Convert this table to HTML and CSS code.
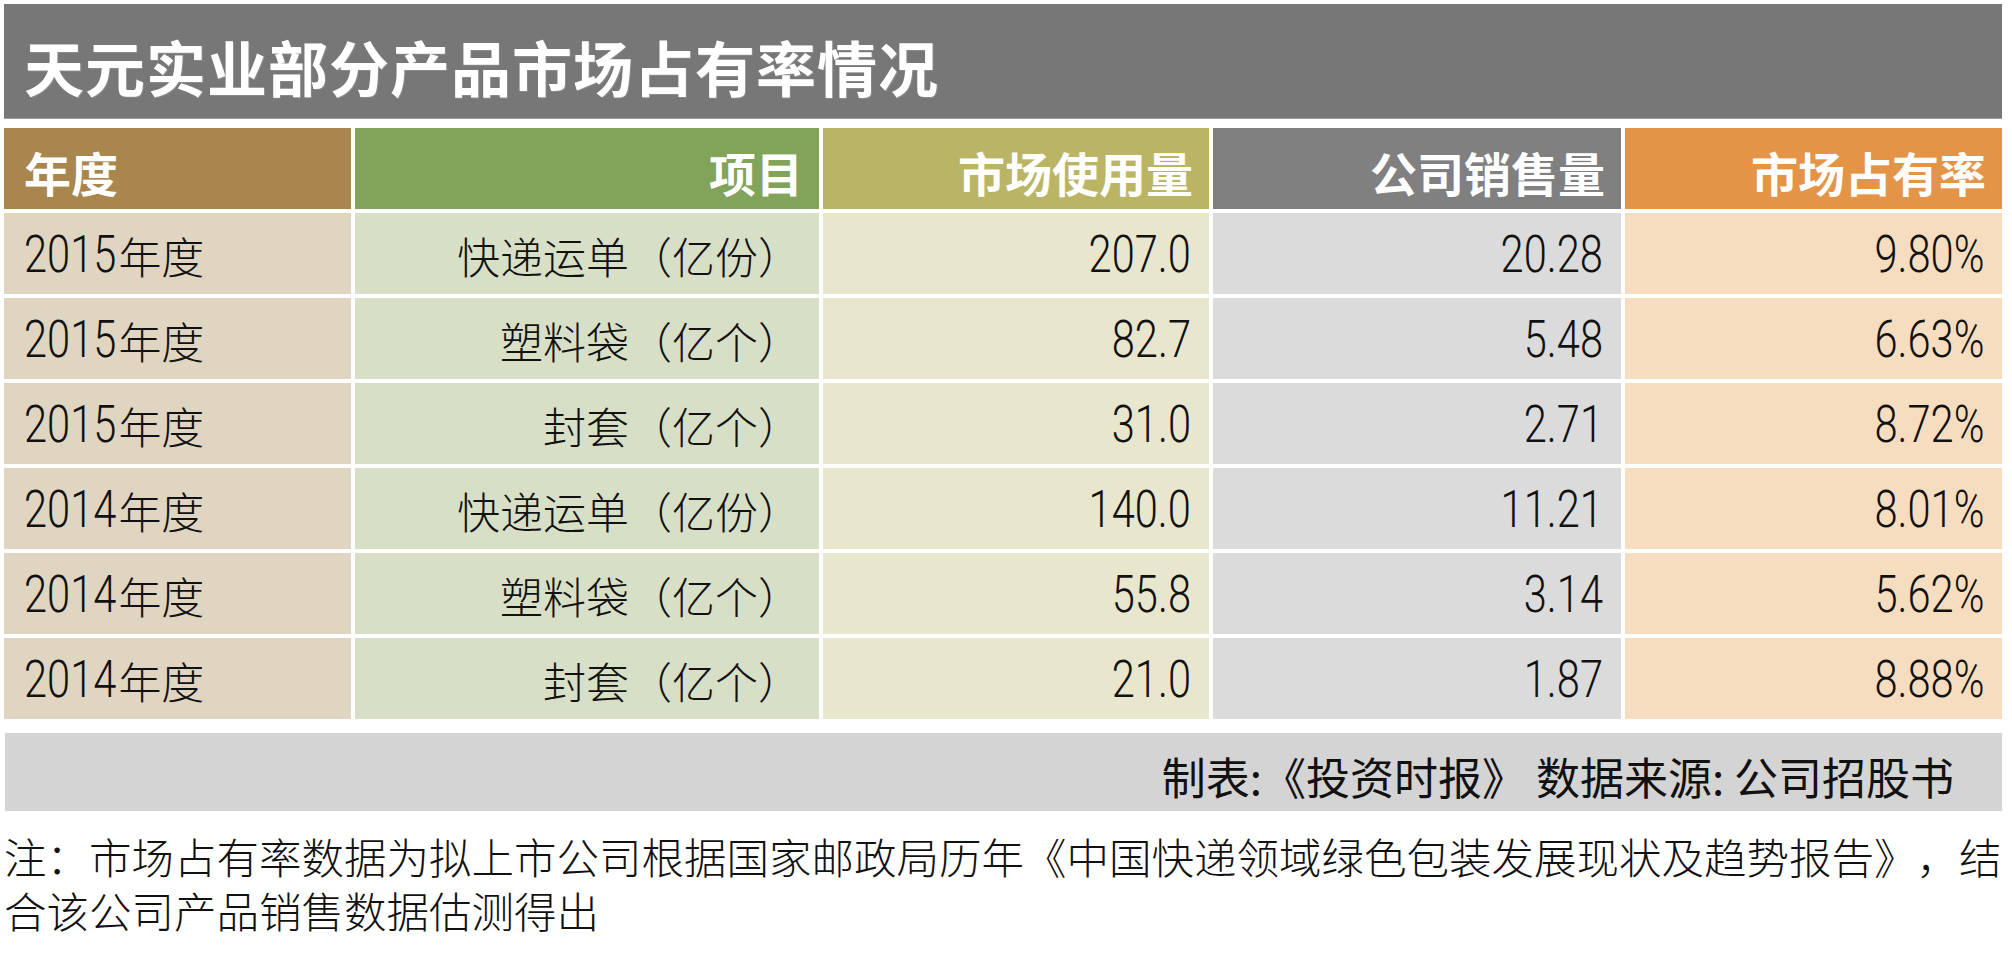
FILE: index.html
```html
<!DOCTYPE html>
<html lang="zh-CN">
<head>
<meta charset="utf-8">
<title>天元实业部分产品市场占有率情况</title>
<link rel="stylesheet" href="styles.css">
</head>
<body>
<div class="page">
  <div class="title">天元实业部分产品市场占有率情况</div>
  <div class="table">
    <div class="cell h c1 left">年度</div>
    <div class="cell h c2">项目</div>
    <div class="cell h c3">市场使用量</div>
    <div class="cell h c4">公司销售量</div>
    <div class="cell h c5">市场占有率</div>

    <div class="cell d c1 left"><span class="num">2015</span>年度</div>
    <div class="cell d c2">快递运单（亿份）</div>
    <div class="cell d c3"><span class="num">207.0</span></div>
    <div class="cell d c4"><span class="num">20.28</span></div>
    <div class="cell d c5"><span class="num">9.80%</span></div>

    <div class="cell d c1 left"><span class="num">2015</span>年度</div>
    <div class="cell d c2">塑料袋（亿个）</div>
    <div class="cell d c3"><span class="num">82.7</span></div>
    <div class="cell d c4"><span class="num">5.48</span></div>
    <div class="cell d c5"><span class="num">6.63%</span></div>

    <div class="cell d c1 left"><span class="num">2015</span>年度</div>
    <div class="cell d c2">封套（亿个）</div>
    <div class="cell d c3"><span class="num">31.0</span></div>
    <div class="cell d c4"><span class="num">2.71</span></div>
    <div class="cell d c5"><span class="num">8.72%</span></div>

    <div class="cell d c1 left"><span class="num">2014</span>年度</div>
    <div class="cell d c2">快递运单（亿份）</div>
    <div class="cell d c3"><span class="num">140.0</span></div>
    <div class="cell d c4"><span class="num">11.21</span></div>
    <div class="cell d c5"><span class="num">8.01%</span></div>

    <div class="cell d c1 left"><span class="num">2014</span>年度</div>
    <div class="cell d c2">塑料袋（亿个）</div>
    <div class="cell d c3"><span class="num">55.8</span></div>
    <div class="cell d c4"><span class="num">3.14</span></div>
    <div class="cell d c5"><span class="num">5.62%</span></div>

    <div class="cell d c1 left"><span class="num">2014</span>年度</div>
    <div class="cell d c2">封套（亿个）</div>
    <div class="cell d c3"><span class="num">21.0</span></div>
    <div class="cell d c4"><span class="num">1.87</span></div>
    <div class="cell d c5"><span class="num">8.88%</span></div>
  </div>
  <div class="source">制表:《投资时报》 数据来源: 公司招股书</div>
  <p class="note">注：市场占有率数据为拟上市公司根据国家邮政局历年《中国快递领域绿色包装发展现状及趋势报告》，结合该公司产品销售数据估测得出</p>
</div>
</body>
</html>
```

FILE: styles.css
```css
html, body {
  margin: 0;
  padding: 0;
  background: #ffffff;
}

body {
  font-family: "Noto Sans CJK SC", "Noto Sans", sans-serif;
  color: #111111;
  text-spacing-trim: space-all;
}

.page {
  padding: 4px 0 0 4px;
  width: 1998px;
}

.title {
  height: 115px;
  box-sizing: border-box;
  background: #777777;
  border-bottom: 1px solid #9c9c9c;
  color: #ffffff;
  font-weight: 700;
  font-size: 60px;
  line-height: 1;
  padding: 32px 0 0 20px;
  letter-spacing: 1px;
  text-shadow: 1px 1px 0 #8a8a8a;
}

.table {
  margin-top: 9px;
  display: grid;
  grid-template-columns: 347px 464px 386px 408px 377px;
  grid-auto-rows: 81px;
  column-gap: 4px;
  row-gap: 4px;
}

.cell {
  display: flex;
  align-items: center;
  justify-content: flex-end;
  padding: 6px 18px 0 18px;
  box-sizing: border-box;
  white-space: nowrap;
}

.cell.left {
  justify-content: flex-start;
  padding-left: 20px;
}

.cell.h {
  color: #ffffff;
  font-weight: 700;
  font-size: 47px;
  padding-right: 16px;
}

.cell.d {
  font-size: 43px;
  font-weight: 300;
  padding-top: 3px;
}

.num {
  display: inline-block;
  font-family: "Roboto", "Liberation Sans", sans-serif;
  font-weight: 300;
  font-size: 52px;
  line-height: 1;
  transform: scaleX(0.8);
  transform-origin: right center;
}

.c1 .num {
  transform-origin: left center;
  margin-right: -21px;
}

.h.c1 { background: #aa864f; }
.h.c2 { background: #82a35a; }
.h.c3 { background: #bab565; }
.h.c4 { background: #808080; }
.h.c5 { background: #e49447; }

.d.c1 { background: #e0d5c1; }
.d.c2 { background: #d7dfc7; }
.d.c3 { background: #e8e6cd; }
.d.c4 { background: #dadbda; }
.d.c5 { background: #f6ddc0; }

.source {
  margin: 14px 0 0 1px;
  height: 78px;
  background: #d4d4d4;
  display: flex;
  align-items: center;
  justify-content: flex-end;
  padding: 8px 48px 0 0;
  box-sizing: border-box;
  font-size: 44px;
  color: #111111;
}

.note {
  margin: 18px 0 0 0;
  width: 2006px;
  font-size: 42.5px;
  font-weight: 300;
  line-height: 54px;
  color: #111111;
}
```
